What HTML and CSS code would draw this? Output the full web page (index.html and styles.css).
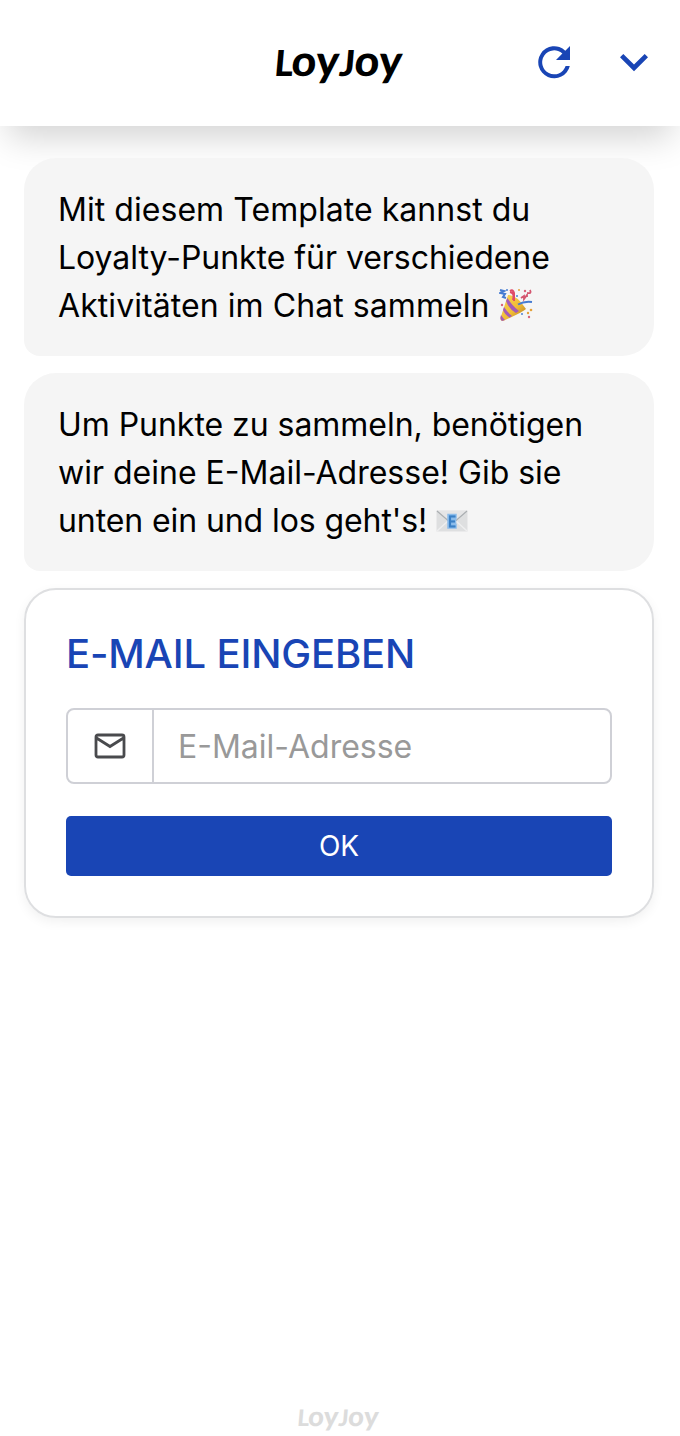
FILE: index.html
```html
<!DOCTYPE html>
<html lang="de">
<head>
<meta charset="utf-8">
<title>LoyJoy</title>
<link rel="stylesheet" href="styles.css">
</head>
<body>
<div class="chat">
  <header class="header">
    <svg class="logo" viewBox="0 0 130 44" role="img" aria-label="LoyJoy"><text class="logo-text" transform="translate(0 33) skewX(-5)" x="-1.500 15.500 40 63.500 78.500 103" y="0">L<tspan class="logo-low">oy</tspan>J<tspan class="logo-low">oy</tspan></text></svg>
    <div class="actions">
      <button class="icon-button" aria-label="Neu starten"><svg class="icon" viewBox="0 0 48 48"><path d="M35.300 11.700A16 16 0 1 0 39.800 27H35.600A12 12 0 1 1 32.400 14.600L26 21H40V7Z"/></svg></button>
      <button class="icon-button" aria-label="Minimieren"><svg class="icon" viewBox="0 0 48 48"><path d="M13.300 14.900 24 25.600 34.700 14.900 38 18.200 24 32.200 10 18.200Z"/></svg></button>
    </div>
  </header>
  <main class="messages">
    <p class="bubble"><span class="line line-a">Mit diesem Template kannst du</span><br><span class="line line-b">Loyalty-Punkte für verschiedene</span><br><span class="line line-c">Aktivitäten im Chat sammeln </span><svg class="emoji party" viewBox="0 0 34 34">
      <defs><linearGradient id="gold" x1="0" y1="0" x2="1" y2="1"><stop offset="0" stop-color="#f6d45a"/><stop offset=".55" stop-color="#f2bd35"/><stop offset="1" stop-color="#a9701f"/></linearGradient></defs>
      <path d="M9 7Q17 6 27 21Q24 24 4 33Q1 33 1.500 30Z" fill="url(#gold)"/>
      <path d="M7 13 8.500 10Q13 18 20 23L17 25Q10 21 7 13ZM4 22 5 19Q9 25 13 28L10.500 29.500Q6 27 4 22ZM1.500 29 2 27Q4 30 6 32L3 33Q1 32 1.500 29Z" fill="#a35bb8"/>
      <path d="M15 13V5Q14 1 11 3M11 4Q16 5 14 12" fill="none" stroke="#e04b67" stroke-width="2"/>
      <path d="M1 2 5 3 1 5 6 6 4 9 7 10M19 16.500Q25 13 33 14" fill="none" stroke="#467cd2" stroke-width="2"/>
      <path d="M22 10 25 8 25 11 28 7 28 9M28 5Q33 6 31 2" fill="none" stroke="#d45770" stroke-width="1.800"/>
      <g fill="#4d82d5"><circle cx="8" cy="2" r="1"/><circle cx="18" cy="8" r="1"/><circle cx="23" cy="26" r="1"/></g>
      <g fill="#da647a"><circle cx="3" cy="17" r="1.200"/><circle cx="26" cy="3" r="1.200"/><circle cx="30" cy="29" r="1.200"/></g>
      <g fill="#e4a23b"><circle cx="32" cy="22" r="1.300"/><circle cx="29" cy="25" r="1.200"/><circle cx="20" cy="2" r="1"/></g>
    </svg></p>
    <p class="bubble"><span class="line line-d">Um Punkte zu sammeln, benötigen</span><br><span class="line">wir deine E-Mail-Adresse! Gib sie</span><br><span class="line line-e">unten ein und los geht's! </span><svg class="emoji mail" viewBox="0 0 32 22">
      <path d="M.5.500H31.500V21.500H.5Z" fill="#dedfe0"/>
      <path d="M1 21 12 11M31 21 20 11" stroke="#eeeeef" stroke-width="1.500"/>
      <path d="M1 1 16 14 31 1" fill="#e5e5e6" stroke="#aaaeb1" stroke-width="1.200"/>
      <path d="M12 4.500H20V8H16V9.500H19.500V13H16V14.500H20V18H12Z" fill="#68a8e4" stroke="#8cbcea" stroke-width="1.500"/>
      <path d="M19.500 6.500H14V16.500H19.500M14 11.500H19" fill="none" stroke="#3b80c5" stroke-width="2"/>
    </svg></p>
    <form class="card">
      <h1 class="title">E-MAIL EINGEBEN</h1>
      <div class="field">
        <span class="field-icon"><svg class="envelope" viewBox="0 0 32 26"><path d="M4 2H28Q30 2 30 4V22Q30 24 28 24H4Q2 24 2 22V4Q2 2 4 2ZM2.500 5 16 13.500 29.500 5"/></svg></span>
        <input class="input" type="email" placeholder="E-Mail-Adresse">
      </div>
      <button class="submit" type="button">OK</button>
    </form>
  </main>
  <footer class="footer"><svg class="footer-logo" viewBox="0 0 130 44" role="img" aria-label="LoyJoy"><text class="logo-text" transform="translate(0 33) skewX(-5)" x="-1.500 15.500 40 63.500 78.500 103" y="0">L<tspan class="logo-low">oy</tspan>J<tspan class="logo-low">oy</tspan></text></svg></footer>
</div>
</body>
</html>
```

FILE: styles.css
```css
* { box-sizing: border-box; }
body { margin: 0; background: #fff; color: #000; font-family: Inter, sans-serif; }
.chat { display: flex; flex-direction: column; height: 1436px; overflow: hidden; }
.header { display: grid; grid-template-columns: 1fr 130px 1fr; align-items: center; height: 126px; flex: none; padding: 0 22px; box-shadow: 0 20px 32px -8px rgba(0, 0, 0, .17); }
.logo { grid-column: 2; width: 130px; height: 44px; margin-top: 4px; overflow: visible; }
.logo-text { font: 900 36px Lato, sans-serif; }
.logo-low { font-size: 43px; }
.actions { display: flex; justify-content: flex-end; gap: 32px; }
.icon-button { width: 48px; height: 48px; padding: 0; border: 0; background: none; color: #1945b5; }
.icon { display: block; width: 48px; height: 48px; fill: currentColor; }
.messages { display: flex; flex: 1; flex-direction: column; gap: 17px; padding: 32px 26px 0 24px; }
.bubble { height: 198px; margin: 0; padding: 28px 34px; border-radius: 32px 32px 32px 16px; background: #f5f5f5; font-size: 32px; line-height: 48px; white-space: nowrap; }
.line-a { letter-spacing: .05px; }
.line-b, .line-d { letter-spacing: -.04px; }
.line-c { letter-spacing: .07px; }
.line-e { letter-spacing: -.09px; }
.emoji { display: inline-block; }
.party { width: 34px; height: 34px; vertical-align: -5px; }
.mail { width: 32px; height: 22px; vertical-align: 0; }
.card { height: 330px; padding: 40px; border: 2px solid #dedfe1; border-radius: 32px; box-shadow: 0 4px 12px rgba(0, 0, 0, .06); }
.title { margin: 0 0 30px; color: #1945b5; font-size: 40px; font-weight: 500; line-height: 48px; letter-spacing: -.17px; white-space: nowrap; }
.field { display: flex; height: 76px; border: 2px solid #cfd0d6; border-radius: 8px; }
.field-icon { display: flex; align-items: center; justify-content: center; width: 86px; border-right: 2px solid #cfd0d6; }
.envelope { width: 32px; height: 26px; fill: none; stroke: #494a4d; stroke-width: 2.8; }
.input { flex: 1; min-width: 0; padding: 0 24px; border: 0; background: none; font: 32px Inter, sans-serif; }
.input::placeholder { color: #999; opacity: 1; }
.submit { display: block; width: 100%; height: 60px; margin-top: 32px; padding: 0; border: 0; border-radius: 5px; background: #1945b5; color: #fff; font: 28px Inter, sans-serif; }
.footer { display: flex; justify-content: center; height: 36px; padding-right: 2px; fill: #dcdcdc; }
.footer-logo { width: 84px; height: 28px; margin-top: 5px; overflow: visible; }
```
